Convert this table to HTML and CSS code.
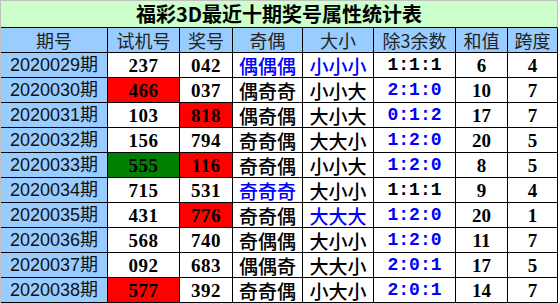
FILE: index.html
```html
<!DOCTYPE html>
<html lang="zh">
<head>
<meta charset="utf-8">
<link rel="stylesheet" href="styles.css">
</head>
<body>
<div class="sheet">
  <div class="title">福彩3D最近十期奖号属性统计表</div>
  <div class="c hd">期号</div><div class="c hd">试机号</div><div class="c hd">奖号</div><div class="c hd">奇偶</div><div class="c hd">大小</div><div class="c hd">除3余数</div><div class="c hd">和值</div><div class="c hd">跨度</div>

  <div class="c per">2020029期</div><div class="c num">237</div><div class="c num">042</div><div class="c cn blue">偶偶偶</div><div class="c cn blue">小小小</div><div class="c ratio">1:1:1</div><div class="c num2">6</div><div class="c num2">4</div>

  <div class="c per">2020030期</div><div class="c num red">466</div><div class="c num">037</div><div class="c cn">偶奇奇</div><div class="c cn">小小大</div><div class="c ratio blue">2:1:0</div><div class="c num2">10</div><div class="c num2">7</div>

  <div class="c per">2020031期</div><div class="c num">103</div><div class="c num red">818</div><div class="c cn">偶奇偶</div><div class="c cn">大小大</div><div class="c ratio blue">0:1:2</div><div class="c num2">17</div><div class="c num2">7</div>

  <div class="c per">2020032期</div><div class="c num">156</div><div class="c num">794</div><div class="c cn">奇奇偶</div><div class="c cn">大大小</div><div class="c ratio blue">1:2:0</div><div class="c num2">20</div><div class="c num2">5</div>

  <div class="c per">2020033期</div><div class="c num green">555</div><div class="c num red">116</div><div class="c cn">奇奇偶</div><div class="c cn">小小大</div><div class="c ratio blue">1:2:0</div><div class="c num2">8</div><div class="c num2">5</div>

  <div class="c per">2020034期</div><div class="c num">715</div><div class="c num">531</div><div class="c cn blue">奇奇奇</div><div class="c cn">大小小</div><div class="c ratio">1:1:1</div><div class="c num2">9</div><div class="c num2">4</div>

  <div class="c per">2020035期</div><div class="c num">431</div><div class="c num red">776</div><div class="c cn">奇奇偶</div><div class="c cn blue">大大大</div><div class="c ratio blue">1:2:0</div><div class="c num2">20</div><div class="c num2">1</div>

  <div class="c per">2020036期</div><div class="c num">568</div><div class="c num">740</div><div class="c cn">奇偶偶</div><div class="c cn">大小小</div><div class="c ratio blue">1:2:0</div><div class="c num2">11</div><div class="c num2">7</div>

  <div class="c per">2020037期</div><div class="c num">092</div><div class="c num">683</div><div class="c cn">偶偶奇</div><div class="c cn">大大小</div><div class="c ratio blue">2:0:1</div><div class="c num2">17</div><div class="c num2">5</div>

  <div class="c per">2020038期</div><div class="c num red">577</div><div class="c num">392</div><div class="c cn">奇奇偶</div><div class="c cn">小大小</div><div class="c ratio blue">2:0:1</div><div class="c num2">14</div><div class="c num2">7</div>
</div>
</body>
</html>
```
FILE: styles.css
```css
html, body {
  margin: 0;
  padding: 0;
  background: #ffffff;
}
.sheet {
  display: grid;
  grid-template-columns: 107px 72px 53px 70px 71px 82px 52px 50px;
  grid-template-rows: 27px repeat(11, 25px);
  width: 558px;
  box-sizing: border-box;
  border-left: 1px solid #c0c0c0;
  border-top: 1px solid #c0c0c0;
  font-family: "Noto Sans CJK SC", sans-serif;
}
.title {
  grid-column: 1 / -1;
  background: #ccffcc;
  border-bottom: 1px solid #000;
  border-right: 1px solid #c0c0c0;
  box-sizing: border-box;
  display: flex;
  align-items: center;
  justify-content: center;
  font-size: 20px;
  font-weight: bold;
  color: #000;
  line-height: 1;
}
.c {
  box-sizing: border-box;
  border-right: 1px solid #000;
  border-bottom: 1px solid #000;
  background: #fff;
  display: flex;
  align-items: center;
  justify-content: center;
  line-height: 1;
  color: #000;
  white-space: nowrap;
}
.hd {
  background: #99ccff;
  font-size: 18px;
  color: #222;
}
.per {
  background: #99ccff;
  font-family: "Liberation Sans", "Noto Sans CJK SC", sans-serif;
  font-size: 18px;
  color: #111;
}
.num {
  font-family: "Liberation Serif", serif;
  font-weight: bold;
  font-size: 19px;
  letter-spacing: 0.5px;
}
.num2 {
  font-family: "Liberation Serif", serif;
  font-weight: bold;
  font-size: 19px;
}
.cn {
  font-size: 19px;
  font-weight: 500;
}
.ratio {
  font-family: "Liberation Mono", monospace;
  font-weight: bold;
  font-size: 18px;
}
.blue {
  color: #0000ff;
}
.red {
  background: #ff0000;
}
.green {
  background: #008000;
}
```
